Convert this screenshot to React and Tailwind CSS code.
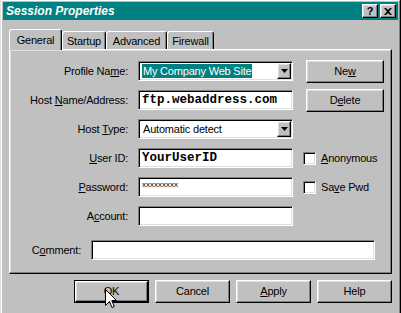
import React from 'react';

const raised =
  'border border-t-white border-l-white border-r-black border-b-black shadow-[inset_-1px_-1px_0_#808080,inset_1px_1px_0_#dfdfdf]';
const sunken =
  'border border-t-[#808080] border-l-[#808080] border-r-white border-b-white shadow-[inset_1px_1px_0_#000,inset_-1px_-1px_0_#dfdfdf]';

function U({ children }) {
  return <span className="underline underline-offset-[1px] decoration-1">{children}</span>;
}

function TitleBar() {
  return (
    <div className="h-[18px] bg-[#008080] flex items-center pl-[3px] pr-[2px]">
      <span className="flex-1 text-white font-bold italic text-[12px] tracking-normal leading-none">
        Session Properties
      </span>
      <div className="flex gap-[2px]">
        <div className={`w-[16px] h-[14px] bg-[#c0c0c0] flex items-center justify-center ${raised}`}>
          <span className="font-bold text-[11px] leading-none tracking-normal">?</span>
        </div>
        <div className={`w-[16px] h-[14px] bg-[#c0c0c0] flex items-center justify-center ${raised}`}>
          <svg width="8" height="7" viewBox="0 0 8 7">
            <path d="M0 0h2l2 2 2-2h2L5 3.5 8 7H6L4 5 2 7H0l3-3.5z" fill="#000" />
          </svg>
        </div>
      </div>
    </div>
  );
}

const tabs = [
  { label: 'General', w: 'w-[53px]', active: true },
  { label: 'Startup', w: 'w-[44px]' },
  { label: 'Advanced', w: 'w-[61px]' },
  { label: 'Firewall', w: 'w-[47px]' },
];

function Tabs() {
  return (
    <div className="flex items-end h-[20px]">
      {tabs.map((t) =>
        t.active ? (
          <div
            key={t.label}
            className={`${t.w} h-[21px] -mb-px relative z-10 bg-[#c0c0c0] rounded-t-[3px] border-t border-l border-r border-t-white border-l-white border-r-black shadow-[inset_-1px_0_0_#808080] flex items-center justify-center`}
          >
            {t.label}
          </div>
        ) : (
          <div
            key={t.label}
            className={`${t.w} h-[18px] bg-[#c0c0c0] rounded-t-[3px] border-t border-l border-r border-t-white border-l-white border-r-black shadow-[inset_-1px_0_0_#808080] flex items-center justify-center pt-px`}
          >
            {t.label}
          </div>
        )
      )}
    </div>
  );
}

function Arrow() {
  return (
    <svg width="7" height="4" viewBox="0 0 7 4">
      <path d="M0 0h7L3.5 4z" fill="#000" />
    </svg>
  );
}

function Combo({ children }) {
  return (
    <div className={`w-[155px] h-[20px] bg-white p-px flex ${sunken}`}>
      <div className="flex-1 flex items-center pl-[2px] overflow-hidden whitespace-nowrap">{children}</div>
      <div className={`w-[14px] h-[16px] bg-[#c0c0c0] flex items-center justify-center ${raised}`}>
        <Arrow />
      </div>
    </div>
  );
}

function TextBox({ children, mono, className = 'w-[155px]' }) {
  return (
    <div
      className={`${className} h-[20px] bg-white flex items-center pl-[3px] whitespace-nowrap overflow-hidden ${sunken} ${
        mono ? "font-['Liberation_Mono',monospace] font-bold text-[12.5px] tracking-normal" : ''
      }`}
    >
      {children}
    </div>
  );
}

function Check({ children }) {
  return (
    <div className="flex items-center gap-[5px] self-center">
      <div className={`w-[13px] h-[13px] bg-white ${sunken}`} />
      <span>{children}</span>
    </div>
  );
}

function Btn({ children, className = 'w-[75px] h-[23px]', primary }) {
  const inner = (
    <div className={`w-full h-full bg-[#c0c0c0] flex items-center justify-center ${raised}`}>{children}</div>
  );
  if (primary) {
    return <div className={`${className} border border-black`}>{inner}</div>;
  }
  return <div className={className}>{inner}</div>;
}

function Label({ children }) {
  return <div className="text-right self-center whitespace-nowrap">{children}</div>;
}

function Panel() {
  return (
    <div className="h-[225px] border border-t-white border-l-white border-r-black border-b-black shadow-[inset_-1px_-1px_0_#808080,inset_1px_1px_0_#dfdfdf] pt-[11px]">
      <div className="grid grid-cols-[118px_155px_auto] grid-rows-[20px_20px_20px_20px_20px_20px] gap-x-[10px] gap-y-[9px]">
        <Label>
          Profile Na<U>m</U>e:
        </Label>
        <Combo>
          <span className="bg-[#008080] text-white px-px leading-[14px]">My Company Web Site</span>
        </Combo>
        <div className="self-center ml-[3px]">
          <Btn className="w-[78px] h-[23px]">
            Ne<U>w</U>
          </Btn>
        </div>

        <Label>
          Host <U>N</U>ame/Address:
        </Label>
        <TextBox mono>ftp.webaddress.com</TextBox>
        <div className="self-center ml-[3px]">
          <Btn className="w-[78px] h-[23px]">
            D<U>e</U>lete
          </Btn>
        </div>

        <Label>
          Host <U>T</U>ype:
        </Label>
        <Combo>
          <span className="pl-px">Automatic detect</span>
        </Combo>
        <div />

        <Label>
          <U>U</U>ser ID:
        </Label>
        <TextBox mono>YourUserID</TextBox>
        <Check>
          <U>A</U>nonymous
        </Check>

        <Label>
          <U>P</U>assword:
        </Label>
        <div className={`w-[155px] h-[20px] bg-white pl-[3px] pt-[3px] text-[8px] leading-none tracking-normal ${sunken}`}>
          xxxxxxxxx
        </div>
        <Check>
          Sa<U>v</U>e Pwd
        </Check>

        <Label>
          A<U>c</U>count:
        </Label>
        <TextBox />
        <div />
      </div>
      <div className="flex items-center mt-[14px]">
        <div className="w-[71px] text-right">
          C<U>o</U>mment:
        </div>
        <TextBox className="w-[284px] ml-[10px]" />
      </div>
    </div>
  );
}

function Cursor() {
  return (
    <svg className="absolute left-[105px] top-[289px]" width="12" height="20" viewBox="0 0 12 20">
      <path
        d="M0.5 0.5V16.5L4.5 12.5L7 18.5L9.3 17.5L6.8 11.5H11.5Z"
        fill="#fff"
        stroke="#000"
        strokeWidth="1"
        strokeLinejoin="miter"
      />
    </svg>
  );
}

export default function App() {
  return (
    <div className="relative w-[401px] h-[313px] overflow-hidden bg-[#c0c0c0] font-['Liberation_Sans',Arial,sans-serif] text-[11px] tracking-[-0.2px] text-black">
      <div className="-mt-px h-[330px] border border-t-[#dfdfdf] border-l-[#dfdfdf] border-r-black border-b-black">
        <div className="h-full border border-t-white border-l-white border-r-[#808080] border-b-[#808080] p-px">
          <TitleBar />
          <div className="px-[6px] pt-[9px]">
            <Tabs />
            <Panel />
            <div className="flex justify-end gap-[6px] mt-[6px]">
              <Btn primary>OK</Btn>
              <Btn>Cancel</Btn>
              <Btn>
                <U>A</U>pply
              </Btn>
              <Btn>Help</Btn>
            </div>
          </div>
        </div>
      </div>
      <Cursor />
    </div>
  );
}
